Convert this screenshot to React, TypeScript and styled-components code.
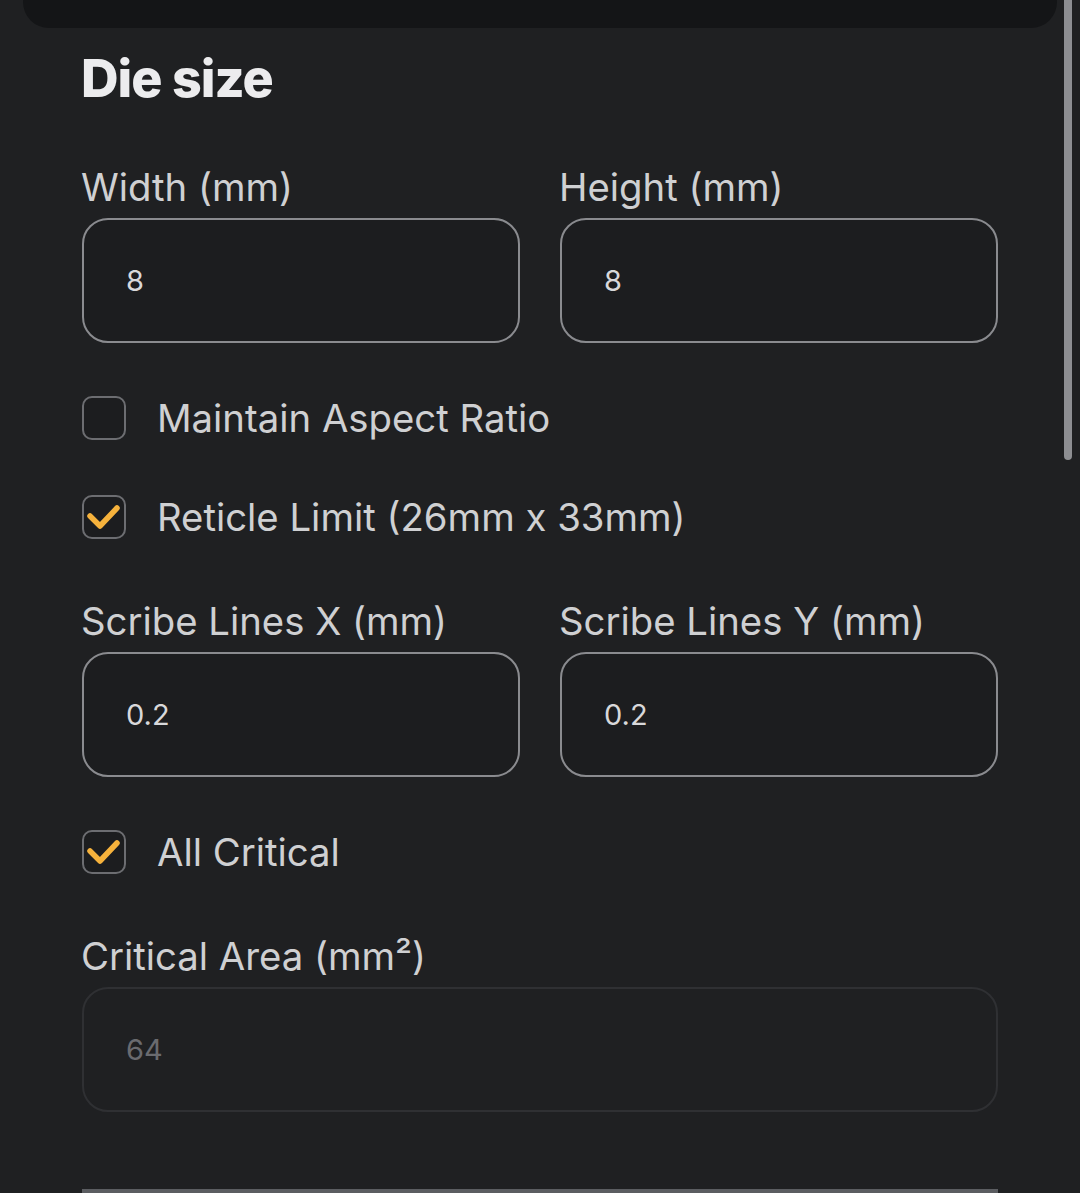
import styled, { createGlobalStyle } from "styled-components";

const GlobalStyle = createGlobalStyle`
  html, body {
    margin: 0;
    padding: 0;
    background: #1f2022;
    overflow: hidden;
  }
  body {
    font-family: Inter, "Noto Sans", "Liberation Sans", sans-serif;
  }
`;

const Screen = styled.div`
  position: relative;
  width: 1080px;
  height: 1193px;
  background: #1f2022;
  overflow: hidden;
`;

const PrevCard = styled.div`
  margin: 0 23px;
  height: 28px;
  background: #141517;
  border-radius: 0 0 26px 26px;
`;

const Scrollbar = styled.div`
  position: absolute;
  top: 0;
  right: 8px;
  width: 8px;
  height: 460px;
  border-radius: 0 0 4px 4px;
  background: #8d8e92;
`;

const Section = styled.section`
  display: flex;
  flex-direction: column;
  padding: 19px 82px 0 81px;
`;

const Title = styled.h2`
  margin: 0 0 53px;
  font-size: 52px;
  line-height: 64px;
  font-weight: 800;
  letter-spacing: -1px;
  color: #ececee;
`;

const Row = styled.div<{ $cols?: number }>`
  display: grid;
  grid-template-columns: repeat(${(p) => p.$cols ?? 2}, 1fr);
  column-gap: 40px;
  padding-left: 1px;
`;

const Field = styled.label`
  display: flex;
  flex-direction: column;
  gap: 7px;
`;

const Label = styled.span`
  font-size: 38.3px;
  line-height: 47px;
  color: #cfd0d2;
  margin-left: -1px;
`;

const Input = styled.div<{ $disabled?: boolean }>`
  box-sizing: border-box;
  height: 125px;
  display: flex;
  align-items: center;
  padding: 0 0 0 42px;
  border: 2px solid ${(p) => (p.$disabled ? "#2f3033" : "#8a8b8f")};
  border-radius: 26px;
  background: ${(p) => (p.$disabled ? "#1f2022" : "#1c1d1f")};
  font-size: 29px;
  color: ${(p) => (p.$disabled ? "#6a6b6f" : "#d8d8da")};
`;

const CheckRow = styled.div<{ $top: number }>`
  display: flex;
  align-items: center;
  gap: 31px;
  height: 44px;
  margin-top: ${(p) => p.$top}px;
  padding-left: 1px;
`;

const Box = styled.span`
  box-sizing: border-box;
  width: 44px;
  height: 44px;
  flex: none;
  border: 2px solid #6c6d71;
  border-radius: 10px;
  background: #1c1d1f;
  display: flex;
  align-items: center;
  justify-content: center;
`;

const CheckText = styled.span`
  font-size: 38.3px;
  line-height: 48px;
  color: #cfd0d2;
`;

const Gap = styled.div<{ $h: number }>`
  height: ${(p) => p.$h}px;
`;

const NextBlock = styled.div`
  margin: 77px 0 0 1px;
  height: 40px;
  border-top: 4px solid #5b5d61;
  background: #232427;
`;

const Check = () => (
  <svg width="44" height="44" viewBox="0 0 44 44" style={{ margin: -2 }}>
    <path
      d="M8 21 L18 31 L35 13"
      fill="none"
      stroke="#f6b23c"
      strokeWidth="5.5"
      strokeLinecap="round"
      strokeLinejoin="round"
    />
  </svg>
);

type CheckboxProps = { label: string; checked?: boolean; top: number };

const Checkbox = ({ label, checked, top }: CheckboxProps) => (
  <CheckRow $top={top}>
    <Box>{checked && <Check />}</Box>
    <CheckText>{label}</CheckText>
  </CheckRow>
);

export default function App() {
  return (
    <Screen>
      <GlobalStyle />
      <PrevCard />
      <Scrollbar />
      <Section>
        <Title>Die size</Title>
        <Row>
          <Field>
            <Label>Width (mm)</Label>
            <Input>8</Input>
          </Field>
          <Field>
            <Label>Height (mm)</Label>
            <Input>8</Input>
          </Field>
        </Row>
        <Checkbox label="Maintain Aspect Ratio" top={53} />
        <Checkbox label="Reticle Limit (26mm x 33mm)" checked top={55} />
        <Gap $h={59} />
        <Row>
          <Field>
            <Label>Scribe Lines X (mm)</Label>
            <Input>0.2</Input>
          </Field>
          <Field>
            <Label>Scribe Lines Y (mm)</Label>
            <Input>0.2</Input>
          </Field>
        </Row>
        <Checkbox label="All Critical" checked top={53} />
        <Gap $h={59} />
        <Row $cols={1}>
          <Field>
            <Label>Critical Area (mm²)</Label>
            <Input $disabled>64</Input>
          </Field>
        </Row>
        <NextBlock />
      </Section>
    </Screen>
  );
}
